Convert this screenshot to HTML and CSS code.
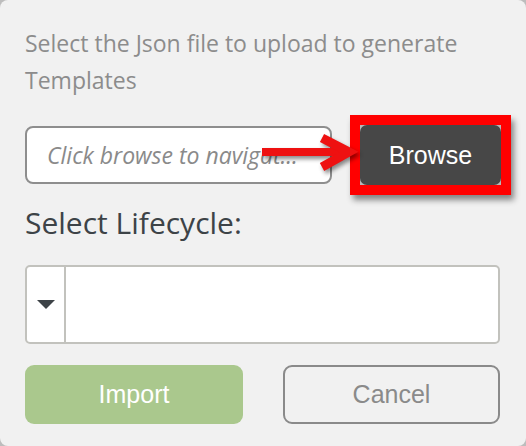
FILE: index.html
```html
<!DOCTYPE html>
<html>
<head>
<meta charset="utf-8">
<link rel="stylesheet" href="styles.css">
</head>
<body>
<div class="panel">
  <p class="desc">Select the Json file to upload to generate Templates</p>
  <div class="file-row">
    <div class="file-input">Click browse to navigat...</div>
    <div class="highlight"><button class="browse">Browse</button></div>
    <svg class="arrow" width="110" height="50" viewBox="0 0 110 50">
      <path d="M7 23 H90" stroke="#ee1111" stroke-width="8" fill="none"/>
      <path d="M67 9 L94 23 L67 38" stroke="#ee1111" stroke-width="9" fill="none" stroke-linejoin="miter"/>
    </svg>
  </div>
  <div class="label">Select Lifecycle:</div>
  <div class="select">
    <div class="select-toggle"><span class="caret"></span></div>
    <div class="select-field"></div>
  </div>
  <div class="actions">
    <button class="btn import">Import</button>
    <button class="btn cancel">Cancel</button>
  </div>
</div>
</body>
</html>
```
FILE: styles.css
```css
html, body {
  margin: 0;
  padding: 0;
  background: #bdbdbd;
}
.panel {
  width: 526px;
  height: 446px;
  box-sizing: border-box;
  background: #f1f1f1;
  border-radius: 8px;
  padding: 25px 26px 0 25px;
  font-family: "Open Sans", sans-serif;
}
.desc {
  margin: 0;
  font-size: 23px;
  line-height: 37px;
  color: #8c8c8c;
}
.file-row {
  position: relative;
  display: flex;
  align-items: center;
  margin-top: 27px;
  height: 58px;
}
.file-input {
  flex-shrink: 0;
  width: 307px;
  height: 58px;
  box-sizing: border-box;
  border: 2px solid #8e8e8e;
  border-radius: 8px;
  background: #fff;
  padding-left: 20px;
  font-style: italic;
  font-size: 23px;
  line-height: 54px;
  color: #8a8a8a;
  white-space: nowrap;
  overflow: hidden;
}
.highlight {
  flex-shrink: 0;
  margin-left: 18px;
  border: 10px solid #ff0000;
  background: #b8b8b8;
  box-shadow: 3px 5px 6px rgba(0, 0, 0, 0.45);
  display: flex;
}
.browse {
  width: 141px;
  height: 60px;
  border: none;
  border-radius: 7px;
  background: #474747;
  color: #fff;
  font-family: "Liberation Sans", Arial, sans-serif;
  font-size: 25px;
  padding: 0;
}
.arrow {
  position: absolute;
  left: 230px;
  top: 3px;
  overflow: visible;
  filter: drop-shadow(2px 3px 2px rgba(0, 0, 0, 0.45));
}
.label {
  margin-top: 21px;
  font-size: 30px;
  line-height: 36px;
  color: #3d4347;
}
.select {
  display: flex;
  margin-top: 24px;
  height: 79px;
  box-sizing: border-box;
  border: 2px solid #c2c2bd;
  border-radius: 5px;
  background: #fff;
}
.select-toggle {
  width: 37px;
  border-right: 2px solid #c2c2bd;
  display: flex;
  align-items: center;
  justify-content: center;
}
.caret {
  width: 0;
  height: 0;
  border-left: 9px solid transparent;
  border-right: 9px solid transparent;
  border-top: 9px solid #3d4347;
}
.select-field {
  flex: 1;
}
.actions {
  display: flex;
  justify-content: space-between;
  margin-top: 21px;
}
.btn {
  width: 218px;
  height: 59px;
  box-sizing: border-box;
  border-radius: 9px;
  font-family: "Liberation Sans", Arial, sans-serif;
  font-size: 25px;
  padding: 0;
}
.import {
  background: #aac88d;
  border: none;
  color: #fff;
}
.cancel {
  width: 217px;
  background: transparent;
  border: 2px solid #8a8a8a;
  color: #8a8a8a;
}
```
